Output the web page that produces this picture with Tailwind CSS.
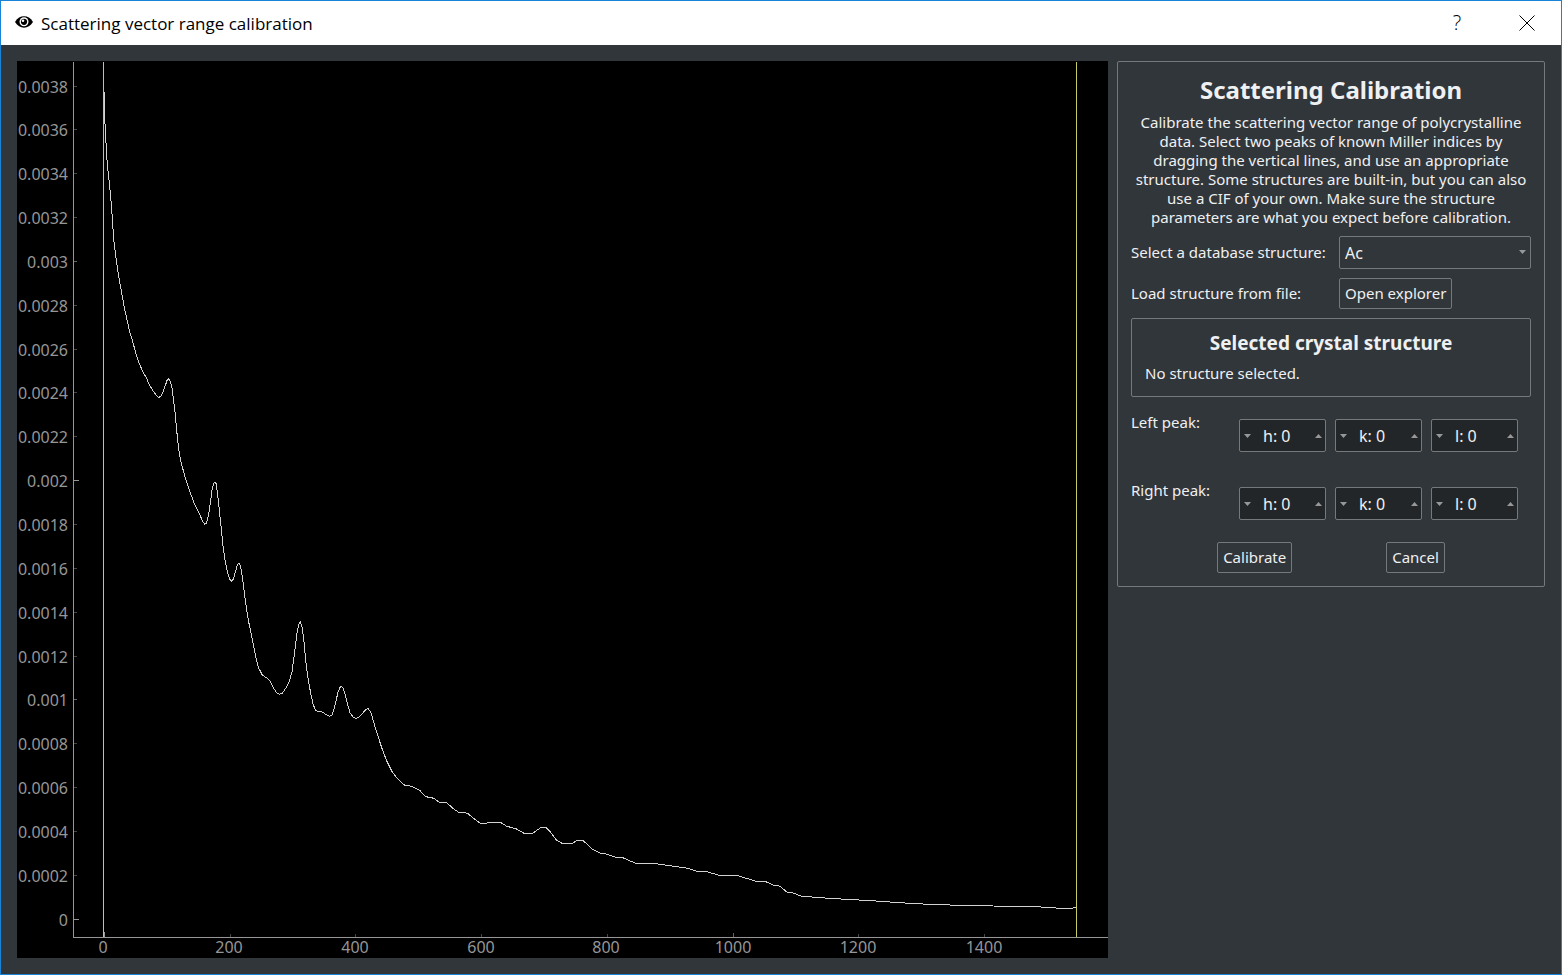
<!DOCTYPE html>
<html lang="en">
<head>
<meta charset="utf-8">
<title>Scattering vector range calibration</title>
<script src="https://cdn.jsdelivr.net/npm/@tailwindcss/browser@4"></script>
</head>
<body class="flex min-h-screen flex-col border border-[#1883d7] bg-[#31363b] font-['Noto_Sans',sans-serif] text-[15px] leading-[19px] text-[#eff0f1]">
<header class="flex h-11 items-center bg-white pr-5 pl-3.5 font-['Open_Sans',sans-serif] text-[17px] text-black">
  <svg class="mr-2 mb-0.5 h-3 w-[18px]" viewBox="0 0 18 12" aria-hidden="true">
    <path d="M0 6C2.500 2 5.500 0.300 9 0.300S15.500 2 18 6C15.500 10 12.500 11.700 9 11.700S2.500 10 0 6Z" fill="#000"/>
    <circle cx="9" cy="5.800" r="4.500" fill="#fff"/>
    <circle cx="9" cy="5.800" r="3.100" fill="#000"/>
    <circle cx="8" cy="4.800" r="1.300" fill="#fff"/>
  </svg>
  <h1 class="flex-1">Scattering vector range calibration</h1>
  <button type="button" aria-label="Help" class="mr-[42px] w-7 text-center text-xl font-light">?</button>
  <button type="button" aria-label="Close" class="flex w-7 justify-center">
    <svg class="size-4" viewBox="0 0 16 16" aria-hidden="true"><path d="M0.500 0.500L15.500 15.500M15.500 0.500L0.500 15.500" stroke="#000" fill="none"/></svg>
  </button>
</header>
<main class="flex flex-1 items-start gap-[9px] p-4">
  <svg class="min-w-0 flex-1 bg-black" viewBox="17 61 1091 897" role="img" aria-label="Scattering intensity">
    <g shape-rendering="crispEdges" fill="none">
      <path stroke="#969696" d="M73.500 62V937.500H1108"/>
      <path stroke="#464646" d="M74 86.500h3M74 129.500h3M74 173.500h3M74 217.500h3M74 305.500h3M74 349.500h3M74 392.500h3M74 436.500h3M74 524.500h3M74 568.500h3M74 612.500h3M74 656.500h3M74 743.500h3M74 787.500h3M74 831.500h3M74 875.500h3M230.500 937v-3M355.500 937v-3M481.500 937v-3M607.500 937v-3M858.500 937v-3M984.500 937v-3"/>
      <path stroke="#646464" d="M74 261.500h3M74 699.500h3M733.500 937v-4"/>
      <path stroke="#969696" d="M74 480.500h5M74 919.500h5M104.500 937v-5"/>
      <polyline stroke="#d2d2d2" points="104.5,92 104.5,117 105.5,131 106.5,154 107.5,166 108.5,175 109.5,184 110.5,196 111.5,206 112.5,221 113.5,237 114.5,246 115.5,254 116.5,261 117.5,268 118.5,275 119.5,281 121.5,292 123.5,303 125.5,313 127.5,322 129.5,331 132.5,341 135.5,352 139,363 143,372 147,379 148.5,383 153,391 157,396 158.7,397.6 161,396 163,392 165.5,385 167,380.5 168.7,379 170,381 171.5,385 172.7,393 174.3,406 175.3,415 177.3,436.7 179.3,453 181.3,463 184.7,476 189.3,490 194,502.7 200,515 202.7,521.7 205,524.3 206.7,522.7 208.7,514.3 210.7,500 212.3,488.3 214,482.7 215,482 216.3,484 218.3,500 220.7,523.3 222.7,543.3 225,560 227.3,571.7 229.7,579.3 231.7,581.3 233.3,579.3 235.7,570.7 237.7,564 239,563 240.3,565.3 242.3,576.7 245,598.3 248.3,620 251.7,636.7 255,653.3 258.3,667.3 262.3,675 266.7,678 270,681 273.3,687.7 276.7,693 279.3,694.3 282.3,693.3 285.7,688.3 289.3,681.7 292,671.7 294.3,655 296.7,635 298.7,624.3 300.3,622.3 302,626.7 304,641.7 306,663.3 308.3,680 310.7,693.3 313.3,705 315.7,710.3 319,711.7 322.3,712 325.7,714.3 329.3,716.3 332,715 334,709.3 336,700.7 338,692.3 340,687.3 341.3,686.3 343,688 345.3,695 347.7,705 350,712.7 353.3,717.3 356,718.3 359,717.3 362,714 365,710.3 367.7,708.3 370.7,711.7 373.3,720.7 376.7,732.3 381.7,747.7 386.7,761 391.7,771 396.7,777.7 404.3,785 411.7,786.3 420,790.7 426,796.7 434,798.3 439.3,802.3 446.7,802.7 453.3,808.7 458.3,812 467.7,813.3 474.7,819.3 480,823 486.7,823 488.3,822.4 500.7,822.4 506.7,826.3 516,828.7 524,833.3 532.7,833.3 541,827.4 545.7,827.4 549.3,830.7 556.7,840.3 562.3,843.4 572.3,843.4 577,840.4 582.7,840.4 585.7,843 591.7,849 600,853 605,853.7 615,857 622.7,857.7 636,863.4 653.3,863.4 670,865.7 688.3,868.3 696.7,871.4 706,871.4 719.3,875.4 736.7,875.4 756.7,881.4 765.7,881.6 774.3,885.7 777.7,885.7 780.7,886.7 786.7,892 792.3,892.7 801.7,896.3 835,898.7 866.7,900.4 905,903 929.3,904.4 960,905.3 993,906 1036.7,906.7 1060,908.3 1070,908.4 1076,907.7"/>
      <path stroke="#c8c864" d="M103.500 62V937M1076.500 62V937"/>
    </g>
    <g class="fill-[#969696] font-['Noto_Sans',sans-serif] text-[16px]" text-anchor="end">
      <text x="68" y="93">0.0038</text><text x="68" y="136">0.0036</text><text x="68" y="180">0.0034</text><text x="68" y="224">0.0032</text><text x="68" y="268">0.003</text><text x="68" y="312">0.0028</text><text x="68" y="356">0.0026</text><text x="68" y="399">0.0024</text><text x="68" y="443">0.0022</text><text x="68" y="487">0.002</text><text x="68" y="531">0.0018</text><text x="68" y="575">0.0016</text><text x="68" y="619">0.0014</text><text x="68" y="663">0.0012</text><text x="68" y="706">0.001</text><text x="68" y="750">0.0008</text><text x="68" y="794">0.0006</text><text x="68" y="838">0.0004</text><text x="68" y="882">0.0002</text><text x="68" y="926">0</text>
    </g>
    <g class="fill-[#969696] font-['Noto_Sans',sans-serif] text-[16px]" text-anchor="middle">
      <text x="103" y="953">0</text><text x="229" y="953">200</text><text x="355" y="953">400</text><text x="481" y="953">600</text><text x="606" y="953">800</text><text x="733" y="953">1000</text><text x="858" y="953">1200</text><text x="984" y="953">1400</text>
    </g>
  </svg>
  <section class="w-[428px] shrink-0 rounded-xs border border-[#76797c] p-[13px]">
    <h2 class="text-center text-2xl leading-[29px] font-bold">Scattering Calibration</h2>
    <p class="mt-[9px] text-center">Calibrate the scattering vector range of polycrystalline<br>data. Select two peaks of known Miller indices by<br>dragging the vertical lines, and use an appropriate<br>structure. Some structures are built-in, but you can also<br>use a CIF of your own. Make sure the structure<br>parameters are what you expect before calibration.</p>
    <div class="mt-[9px] grid grid-cols-[199px_1fr] items-center gap-[9px]">
      <label for="structure">Select a database structure:</label>
      <div class="relative">
        <select id="structure" class="h-[33px] w-full appearance-none rounded-xs border border-[#76797c] px-[5px] text-base"><option>Ac</option></select>
        <svg class="pointer-events-none absolute top-3.5 right-[5px] h-1 w-[7px]" viewBox="0 0 7 4" aria-hidden="true"><path d="M0 0H7L3.500 4Z" fill="#969899"/></svg>
      </div>
      <span id="load">Load structure from file:</span>
      <button type="button" aria-describedby="load" class="h-[31px] justify-self-start rounded-xs border border-[#76797c] px-[5px]">Open explorer</button>
    </div>
    <section class="mt-[9px] h-[79px] rounded-xs border border-[#76797c] px-[13px] py-3">
      <h3 class="text-center text-[19px] leading-[25px] font-bold">Selected crystal structure</h3>
      <p class="mt-2">No structure selected.</p>
    </section>
    <fieldset class="mt-[22px] flex gap-[9px]">
      <legend class="float-left mr-[9px] -mt-1.5 w-[90px]">Left peak:</legend>
      <div class="flex h-[33px] w-[87px] items-center rounded-xs border border-[#76797c] bg-[#232629] pr-[3px] pl-1">
        <button type="button" aria-label="Decrease left h"><svg class="block h-1 w-[7px]" viewBox="0 0 7 4"><path d="M0 0H7L3.500 4Z" fill="#969899"/></svg></button>
        <input aria-label="Left h" value="h: 0" class="min-w-0 flex-1 px-3 text-base">
        <button type="button" aria-label="Increase left h"><svg class="block h-1 w-[7px]" viewBox="0 0 7 4"><path d="M0 4H7L3.500 0Z" fill="#969899"/></svg></button>
      </div>
      <div class="flex h-[33px] w-[87px] items-center rounded-xs border border-[#76797c] bg-[#232629] pr-[3px] pl-1">
        <button type="button" aria-label="Decrease left k"><svg class="block h-1 w-[7px]" viewBox="0 0 7 4"><path d="M0 0H7L3.500 4Z" fill="#969899"/></svg></button>
        <input aria-label="Left k" value="k: 0" class="min-w-0 flex-1 px-3 text-base">
        <button type="button" aria-label="Increase left k"><svg class="block h-1 w-[7px]" viewBox="0 0 7 4"><path d="M0 4H7L3.500 0Z" fill="#969899"/></svg></button>
      </div>
      <div class="flex h-[33px] w-[87px] items-center rounded-xs border border-[#76797c] bg-[#232629] pr-[3px] pl-1">
        <button type="button" aria-label="Decrease left l"><svg class="block h-1 w-[7px]" viewBox="0 0 7 4"><path d="M0 0H7L3.500 4Z" fill="#969899"/></svg></button>
        <input aria-label="Left l" value="l: 0" class="min-w-0 flex-1 px-3 text-base">
        <button type="button" aria-label="Increase left l"><svg class="block h-1 w-[7px]" viewBox="0 0 7 4"><path d="M0 4H7L3.500 0Z" fill="#969899"/></svg></button>
      </div>
    </fieldset>
    <fieldset class="mt-[35px] flex gap-[9px]">
      <legend class="float-left mr-[9px] -mt-1.5 w-[90px]">Right peak:</legend>
      <div class="flex h-[33px] w-[87px] items-center rounded-xs border border-[#76797c] bg-[#232629] pr-[3px] pl-1">
        <button type="button" aria-label="Decrease right h"><svg class="block h-1 w-[7px]" viewBox="0 0 7 4"><path d="M0 0H7L3.500 4Z" fill="#969899"/></svg></button>
        <input aria-label="Right h" value="h: 0" class="min-w-0 flex-1 px-3 text-base">
        <button type="button" aria-label="Increase right h"><svg class="block h-1 w-[7px]" viewBox="0 0 7 4"><path d="M0 4H7L3.500 0Z" fill="#969899"/></svg></button>
      </div>
      <div class="flex h-[33px] w-[87px] items-center rounded-xs border border-[#76797c] bg-[#232629] pr-[3px] pl-1">
        <button type="button" aria-label="Decrease right k"><svg class="block h-1 w-[7px]" viewBox="0 0 7 4"><path d="M0 0H7L3.500 4Z" fill="#969899"/></svg></button>
        <input aria-label="Right k" value="k: 0" class="min-w-0 flex-1 px-3 text-base">
        <button type="button" aria-label="Increase right k"><svg class="block h-1 w-[7px]" viewBox="0 0 7 4"><path d="M0 4H7L3.500 0Z" fill="#969899"/></svg></button>
      </div>
      <div class="flex h-[33px] w-[87px] items-center rounded-xs border border-[#76797c] bg-[#232629] pr-[3px] pl-1">
        <button type="button" aria-label="Decrease right l"><svg class="block h-1 w-[7px]" viewBox="0 0 7 4"><path d="M0 0H7L3.500 4Z" fill="#969899"/></svg></button>
        <input aria-label="Right l" value="l: 0" class="min-w-0 flex-1 px-3 text-base">
        <button type="button" aria-label="Increase right l"><svg class="block h-1 w-[7px]" viewBox="0 0 7 4"><path d="M0 4H7L3.500 0Z" fill="#969899"/></svg></button>
      </div>
    </fieldset>
    <div class="mt-[22px] flex justify-center gap-[94px]">
      <button type="button" class="h-[31px] rounded-xs border border-[#76797c] px-[5px]">Calibrate</button>
      <button type="button" class="h-[31px] rounded-xs border border-[#76797c] px-[5px]">Cancel</button>
    </div>
  </section>
</main>
</body>
</html>
